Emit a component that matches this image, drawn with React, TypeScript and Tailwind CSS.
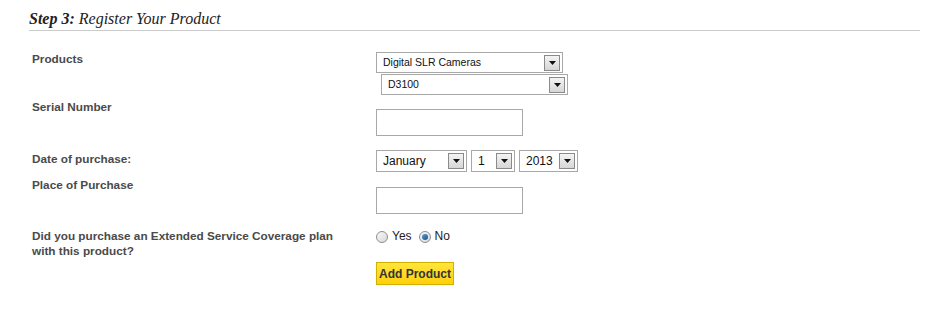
import React from 'react';

function Arrow() {
  return (
    <span className="flex h-[16px] w-[16px] items-center justify-center border border-[#8a8a8a] bg-gradient-to-b from-[#f4f4f4] to-[#d6d6d6]">
      <svg width="7" height="4" viewBox="0 0 7 4">
        <path d="M0 0h7L3.5 4z" fill="#111" />
      </svg>
    </span>
  );
}

function FakeSelect({ value, className, textClass }: { value: string; className: string; textClass: string }) {
  return (
    <div className={`flex items-center justify-between border border-[#a8a8a8] bg-white pl-[6px] pr-[2px] ${className}`}>
      <span className={`text-[#111] ${textClass}`}>{value}</span>
      <Arrow />
    </div>
  );
}

function Radio({ checked }: { checked?: boolean }) {
  return (
    <span className="flex h-[12px] w-[12px] items-center justify-center rounded-full border border-[#8d8d8d] bg-gradient-to-br from-[#fafafa] to-[#d8d8d8]">
      {checked && <span className="h-[6px] w-[6px] rounded-full bg-gradient-to-br from-[#5aa0d8] to-[#1a4f86]" />}
    </span>
  );
}

function TextBox() {
  return <div className="h-[27px] w-[147px] border border-[#a8a8a8] bg-white" />;
}

export default function App() {
  const label = 'w-[347px] shrink-0 pl-[3px] text-[11.75px] font-bold leading-[15px] text-[#4a4a4a]';
  return (
    <div className="h-[309px] w-[937px] bg-white font-['Liberation_Sans',Arial,sans-serif]">
      <div className="pl-[29px] pr-[17px] pt-[10px]">
        <h2 className="font-['Liberation_Serif',Georgia,serif] text-[16px] italic leading-[18px] text-[#222]">
          <b>Step 3:</b> Register Your Product
        </h2>
        <div className="mt-[2px] h-px bg-[#cccccc]" />

        <div className="mt-[20px] flex">
          <div className={label}>Products</div>
          <div className="flex flex-col gap-[1px] pt-[1px]">
            <FakeSelect value="Digital SLR Cameras" className="h-[21px] w-[187px]" textClass="text-[10.5px]" />
            <FakeSelect value="D3100" className="ml-[5px] h-[21px] w-[187px]" textClass="text-[10.5px]" />
          </div>
        </div>

        <div className="mt-[4px] flex">
          <div className={label}>Serial Number</div>
          <div className="pt-[10px]">
            <TextBox />
          </div>
        </div>

        <div className="mt-[14px] flex">
          <div className={`${label} pt-[1px]`}>Date of purchase:</div>
          <div className="flex gap-[4px]">
            <FakeSelect value="January" className="h-[22px] w-[91px]" textClass="text-[12px]" />
            <FakeSelect value="1" className="h-[22px] w-[44px]" textClass="text-[12px]" />
            <FakeSelect value="2013" className="h-[22px] w-[59px]" textClass="text-[12px]" />
          </div>
        </div>

        <div className="mt-[5px] flex">
          <div className={label}>Place of Purchase</div>
          <div className="pt-[10px]">
            <TextBox />
          </div>
        </div>

        <div className="mt-[14px] flex">
          <div className={label}>
            Did you purchase an Extended Service Coverage plan
            <br />
            with this product?
          </div>
          <div className="flex flex-col items-start pt-[1px]">
            <div className="flex items-center text-[12px] leading-[15px] text-[#222]">
              <Radio />
              <span className="ml-[4px]">Yes</span>
              <span className="ml-[7px]">
                <Radio checked />
              </span>
              <span className="ml-[4px]">No</span>
            </div>
            <button className="mt-[18px] h-[23px] w-[78px] border border-[#d2b000] bg-gradient-to-b from-[#ffe53a] to-[#ffd000] text-[12px] font-bold text-[#333]">
              Add Product
            </button>
          </div>
        </div>
      </div>
    </div>
  );
}
